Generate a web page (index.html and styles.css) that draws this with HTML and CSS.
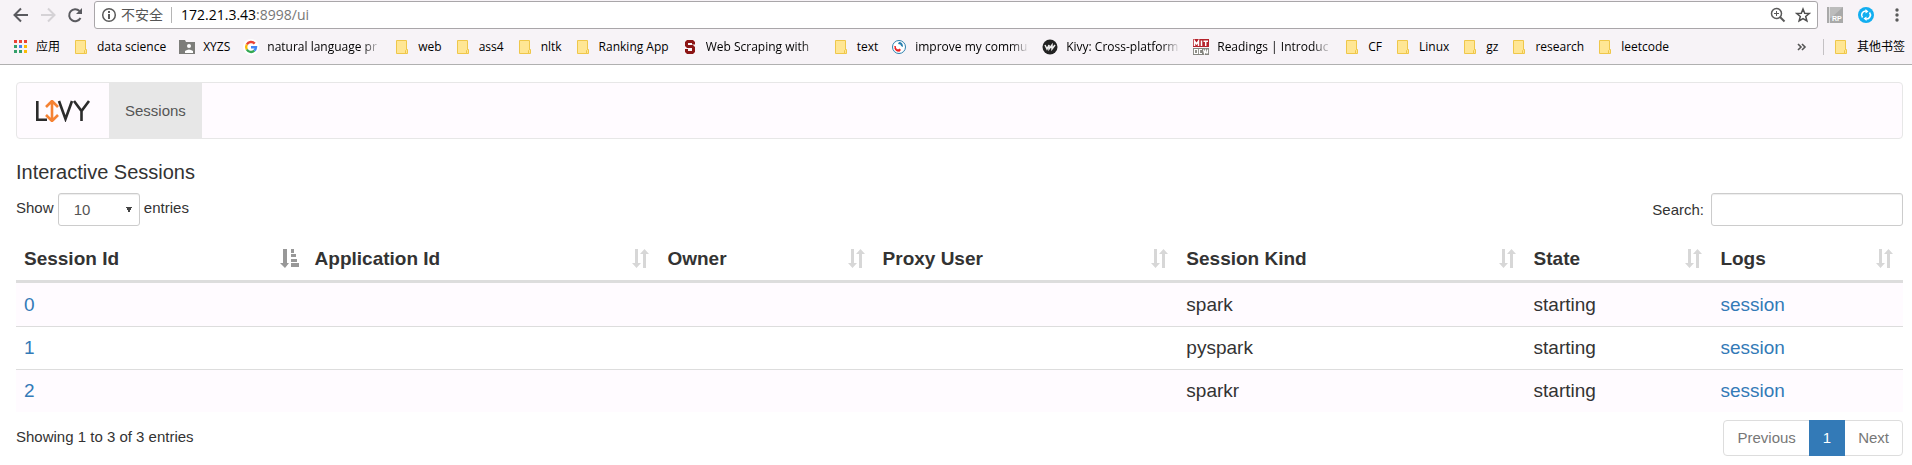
FILE: index.html
```
<!DOCTYPE html>
<html lang="zh-CN">
<head>
<meta charset="utf-8">
<title>Livy - Sessions</title>
<link rel="stylesheet" href="styles.css">
</head>
<body>
<svg class="defs" aria-hidden="true">
  <symbol id="folder" viewBox="0 0 16 16"><path d="M2.5 1.500h10v13h-10z" fill="#ffe694" stroke="#efc74a"/><path d="M12.500 10.500h1v4h-2v-3z" fill="#ffe694" stroke="#efc74a"/></symbol>
  <symbol id="sort" viewBox="0 0 20 20"><path d="M4 0h3v14h3l-4.500 5L1 14h3zM12 19V5H9l4.500-5L18 5h-3v14z" fill="#d7d7d7"/></symbol>
  <symbol id="sorted" viewBox="0 0 20 20"><path d="M4 0h4v14h2l-4 5-5-5h3zM12 0h3v4h-3zM12 5h5v3h-5zM12 10h6v3h-6zM12 14h8v4h-8z" fill="#989898"/></symbol>
</svg>
<header class="browser">
  <div class="toolbar">
    <button class="tool" aria-label="Back"><svg width="16" height="16" viewBox="0 0 16 16"><path d="M15 8H2M8 1.500L1.500 8 8 14.500" fill="none" stroke="#5a5a5f" stroke-width="2"/></svg></button>
    <button class="tool" aria-label="Forward"><svg width="16" height="16" viewBox="0 0 16 16"><path d="M1 8h13M8 1.500L14.500 8 8 14.500" fill="none" stroke="#d5d2d6" stroke-width="2"/></svg></button>
    <button class="tool" aria-label="Reload"><svg width="16" height="16" viewBox="0 0 16 16"><path d="M13.500 11A6 6 0 1 1 12.500 4" fill="none" stroke="#5a5a5f" stroke-width="2"/><path d="M15 1v6H9z" fill="#5a5a5f"/></svg></button>
    <div class="address">
      <svg width="16" height="16" viewBox="0 0 16 16"><circle cx="8" cy="8" r="6.300" fill="none" stroke="#5a5a5a" stroke-width="1.500"/><path d="M7 4h2v2H7zM7 7h2v5H7z" fill="#5a5a5a"/></svg>
      <span class="secure">不安全</span>
      <span class="url">172.21.3.43<span class="path">:8998/ui</span></span>
      <button class="tool" aria-label="Zoom"><svg width="16" height="16" viewBox="0 0 16 16"><circle cx="6.500" cy="6.500" r="5" fill="none" stroke="#5a5a5a" stroke-width="1.500"/><path d="M10 10l4.500 4.500" stroke="#5a5a5a" stroke-width="2"/><path d="M4 6.500h5M6.500 4v5" stroke="#5a5a5a"/></svg></button>
      <button class="tool star" aria-label="Bookmark"><svg width="16" height="16" viewBox="0 0 16 16"><path d="M8 2l1.700 4.200 4.500.3-3.500 2.900 1.200 4.600L8 11.600 4.100 14l1.200-4.600L1.800 6.500l4.500-.3z" fill="none" stroke="#4f4f4f" stroke-width="1.500"/></svg></button>
    </div>
    <button class="tool" aria-label="RP extension"><svg width="16" height="16" viewBox="0 0 16 16"><path d="M0 0h16v16H0z" fill="#a9a9a9"/><path d="M3 0h13L4 11H3z" fill="#bcbcbc"/><path d="M2.500 0v16" stroke="#ddd"/><text x="5" y="14" class="rp">RP</text></svg></button>
    <button class="tool" aria-label="Sync extension"><svg width="16" height="16" viewBox="0 0 16 16"><circle cx="8" cy="8" r="8" fill="#12aef0"/><path d="M4.500 10.500A4 4 0 0 1 8 4M11.500 5.500A4 4 0 0 1 8 12" fill="none" stroke="#fff" stroke-width="1.600"/><path d="M7.500 2l3 2.500-3 2zM8.500 14l-3-2.500 3-2z" fill="#fff"/></svg></button>
    <button class="tool" aria-label="Menu"><svg width="16" height="16" viewBox="0 0 16 16"><g fill="#5a5a5a"><circle cx="8" cy="3" r="1.700"/><circle cx="8" cy="8" r="1.700"/><circle cx="8" cy="13" r="1.700"/></g></svg></button>
  </div>
  <nav class="bookmarks" aria-label="Bookmarks">
    <a href="#"><svg viewBox="0 0 16 16"><path d="M2 1h3v3H2z" fill="#ea4335"/><path d="M7 1h3v3H7zM12 1h3v3h-3z" fill="#ea4335"/><path d="M2 6h3v3H2z" fill="#34a06a"/><path d="M7 6h3v3H7z" fill="#4285f4"/><path d="M12 6h3v3h-3z" fill="#fbbc05"/><path d="M2 11h3v3H2zM7 11h3v3H7z" fill="#34a06a"/><path d="M12 11h3v3h-3z" fill="#fbbc05"/></svg><span>应用</span></a>
    <a href="#"><svg><use href="#folder"/></svg><span>data science</span></a>
    <a href="#"><svg viewBox="0 0 16 16"><path d="M0 1h6l1 2h9v12H0z" fill="#7d7d7a"/><circle cx="10" cy="7" r="2" fill="#fff"/><path d="M6 14v-2q4-3 8 0v2z" fill="#fff"/></svg><span>XYZS</span></a>
    <a href="#"><svg viewBox="0 0 16 16"><circle cx="8" cy="8" r="8" fill="#fff"/><g fill="none" stroke-width="2.400"><path d="M3.800 5.500A4.900 4.900 0 0 1 11.700 4.600" stroke="#ea4335"/><path d="M3.800 5.500a5 5 0 0 0 0 5" stroke="#fbbc05"/><path d="M3.800 10.500a4.900 4.900 0 0 0 7.500 1.200" stroke="#34a853"/><path d="M8 8.200h5a5 5 0 0 1-1.700 3.500" stroke="#4285f4"/></g></svg><span class="cut">natural language pr</span></a>
    <a href="#"><svg><use href="#folder"/></svg><span>web</span></a>
    <a href="#"><svg><use href="#folder"/></svg><span>ass4</span></a>
    <a href="#"><svg><use href="#folder"/></svg><span>nltk</span></a>
    <a href="#"><svg><use href="#folder"/></svg><span>Ranking App</span></a>
    <a href="#"><svg viewBox="0 0 16 16"><path d="M13 5.500V3l-2-2H5L3 3v4l2 2h5v3H6v-2H3v3l2 2h6l2-2V8l-2-2H6V4h4v1.500z" fill="#8c1515"/></svg><span class="cut">Web Scraping with</span></a>
    <a href="#"><svg><use href="#folder"/></svg><span>text</span></a>
    <a href="#"><svg viewBox="0 0 16 16"><circle cx="8" cy="8" r="6.500" fill="#fff" stroke="#2a7fae"/><path d="M8 3q4 0 4 5l-2-1q0-2-3-2z" fill="#2a7fae"/><path d="M4 7l1 3q2 2 4 0v2q-4 1-5-2z" fill="#e22" stroke="#e22"/></svg><span class="cut">improve my commu</span></a>
    <a href="#"><svg viewBox="0 0 16 16"><circle cx="8" cy="8" r="7.500" fill="#222"/><path d="M3 6l2 4 2-4v4l3-4v4l3-4" fill="none" stroke="#eee" stroke-width="1.500"/></svg><span class="cut">Kivy: Cross-platform</span></a>
    <a href="#"><svg viewBox="0 0 16 16"><path d="M0 0h16v8H0z" fill="#b5222b"/><path d="M0 9h16v7H0z" fill="#85857f"/><g fill="none" stroke="#fff"><path stroke-width="1.500" d="M1.500 7V2l2 3 2-3v5M8.500 1.500V7M10.500 2.200H15M12.700 2v5"/><path stroke-width="1.200" d="M1.500 10.500h3v4h-3zM9 10.500H6.500v4H9M14.500 10.500v4M10.500 10.500l1 4 1-3 1 3"/></g></svg><span class="cut">Readings | Introduc</span></a>
    <a href="#"><svg><use href="#folder"/></svg><span>CF</span></a>
    <a href="#"><svg><use href="#folder"/></svg><span>Linux</span></a>
    <a href="#"><svg><use href="#folder"/></svg><span>gz</span></a>
    <a href="#"><svg><use href="#folder"/></svg><span>research</span></a>
    <a href="#"><svg><use href="#folder"/></svg><span>leetcode</span></a>
    <button class="more" aria-label="More bookmarks"><svg viewBox="0 0 16 16"><path d="M4 5l3 3-3 3M8 5l3 3-3 3" fill="none" stroke="#555" stroke-width="1.600"/></svg></button>
    <a class="other" href="#"><svg><use href="#folder"/></svg><span>其他书签</span></a>
  </nav>
</header>
<main class="page">
  <nav class="navbar">
    <a class="brand" href="#" aria-label="Livy"><svg width="56" height="22" viewBox="0 0 56 22"><g fill="none" stroke="#2b2b2b" stroke-width="2.600"><path d="M2.300 1v18.700H12"/><path d="M24 1l6.500 18L37 1"/><path d="M39 1l7.500 10L54 1M46.500 10v11"/></g><path d="M17 2v18M11 7l6-6 6 6M11 15l6 6 6-6" fill="none" stroke="#f58233" stroke-width="2.600"/></svg></a>
    <a class="tab" href="#">Sessions</a>
  </nav>
  <h1>Interactive Sessions</h1>
  <div class="controls">
    <label>Show <select><option>10</option><option>25</option><option>50</option><option>100</option></select> entries</label>
    <label class="search">Search: <input type="search"></label>
  </div>
  <table>
    <colgroup><col class="c-id"><col class="c-app"><col class="c-owner"><col class="c-proxy"><col class="c-kind"><col class="c-state"><col class="c-logs"></colgroup>
    <thead><tr>
      <th><button>Session Id<svg><use href="#sorted"/></svg></button></th>
      <th><button>Application Id<svg><use href="#sort"/></svg></button></th>
      <th><button>Owner<svg><use href="#sort"/></svg></button></th>
      <th><button>Proxy User<svg><use href="#sort"/></svg></button></th>
      <th><button>Session Kind<svg><use href="#sort"/></svg></button></th>
      <th><button>State<svg><use href="#sort"/></svg></button></th>
      <th><button>Logs<svg><use href="#sort"/></svg></button></th>
    </tr></thead>
    <tbody>
      <tr><td><a href="#">0</a></td><td></td><td></td><td></td><td>spark</td><td>starting</td><td><a href="#">session</a></td></tr>
      <tr><td><a href="#">1</a></td><td></td><td></td><td></td><td>pyspark</td><td>starting</td><td><a href="#">session</a></td></tr>
      <tr><td><a href="#">2</a></td><td></td><td></td><td></td><td>sparkr</td><td>starting</td><td><a href="#">session</a></td></tr>
    </tbody>
  </table>
  <footer class="foot">
    <p>Showing 1 to 3 of 3 entries</p>
    <nav class="pages" aria-label="Pages"><a href="#">Previous</a><a class="current" href="#">1</a><a href="#">Next</a></nav>
  </footer>
</main>
</body>
</html>
```
FILE: styles.css
```
* { box-sizing: border-box; }
body {
  margin: 0;
  background: #fff;
  color: #333;
  font: 15px/22px "Liberation Sans", Arial, sans-serif;
}
a { color: #337ab7; text-decoration: none; }
button { padding: 0; border: 0; background: none; color: inherit; font: inherit; }
.defs { display: none; }

.browser {
  background: #f7f3f7;
  border-bottom: 1px solid #b0b0b0;
  color: #000;
  font-family: "Open Sans", "Noto Sans CJK SC", sans-serif;
}
.toolbar { display: flex; align-items: center; gap: 11px; padding: 1px 3px 0 13px; }
.tool { display: flex; width: 16px; height: 16px; flex: none; }
.address {
  flex: 1;
  display: flex;
  align-items: center;
  height: 28px;
  margin-right: -2px;
  padding: 0 6px;
  background: #fff;
  border: 1px solid #a9a6a9;
  border-radius: 3px;
  font-size: 14px;
}
.address ~ .tool { margin-right: 4px; }
.secure { margin-left: 4px; padding-right: 8px; border-right: 1px solid #b5b5b5; color: #555; line-height: 16px; }
.url { flex: 1; margin-left: 9px; }
.path { color: #777; }
.star { margin-left: 9px; }
.rp { font: bold 7px "Liberation Sans", sans-serif; fill: #fff; }

.bookmarks { display: flex; align-items: center; gap: 13px; height: 35px; padding: 0 7px 0 12px; font-size: 12px; }
.bookmarks a { display: flex; align-items: center; gap: 8px; color: #000; white-space: nowrap; }
.bookmarks svg { width: 16px; height: 16px; flex: none; display: block; }
.cut { width: 114px; mask-image: linear-gradient(to right, #000 84%, transparent); }
.more { margin-left: auto; }
.other { padding-left: 10px; background: linear-gradient(#c4c1c4, #c4c1c4) left center / 1px 16px no-repeat; }

.page { padding: 17px 9px 9px 16px; }
.navbar { display: flex; height: 57px; background: #fffbff; border: 1px solid #e7e7e7; border-radius: 4px; }
.brand { display: flex; align-items: center; padding: 0 18px; }
.tab { display: flex; align-items: center; padding: 0 16px; background: #e7e7e7; color: #555; }
h1 { margin: 22px 0 10px; font-size: 20px; line-height: 22px; font-weight: 400; }
.controls { display: flex; justify-content: space-between; }
select, input {
  height: 33px;
  border: 1px solid #ccc;
  border-radius: 3px;
  background: #fff;
  color: #555;
  font: inherit;
  box-shadow: inset 0 1px 1px #00000013;
}
select {
  width: 82px;
  padding: 0 12px 0 15px;
  vertical-align: middle;
  appearance: none;
  background-image: linear-gradient(to bottom right, #444 50%, transparent 52%), linear-gradient(to bottom left, #444 50%, transparent 52%);
  background-size: 3px 6px;
  background-position: right 7px center, right 10px center;
  background-repeat: no-repeat;
}
.search { display: flex; align-items: center; gap: 7px; }
input { width: 192px; }

table { width: 100%; margin-top: 11px; border-collapse: separate; border-spacing: 0; table-layout: fixed; font-size: 19px; line-height: 26px; }
.c-id { width: 15.4%; }
.c-app { width: 18.7%; }
.c-owner { width: 11.4%; }
.c-proxy { width: 16.1%; }
.c-kind { width: 18.4%; }
.c-state { width: 9.9%; }
th { padding: 9px 8px 8px; border-bottom: 3px solid #ddd; text-align: left; }
th button { display: flex; justify-content: space-between; align-items: center; width: 100%; font-weight: 700; }
th svg { width: 20px; height: 20px; }
td { height: 43px; padding: 8px; border-top: 1px solid #ddd; }
tbody tr:first-child td { border-top: 0; }
tbody tr:nth-child(odd) { background: #fffbff; }
.foot { display: flex; justify-content: space-between; margin-top: 8px; }
.foot p { margin: 6px 0; }
.pages { display: flex; height: 36px; border: 1px solid #ddd; border-radius: 4px; }
.pages a { padding: 6px 13px; color: #777; }
.pages .current { margin: -1px 0; padding: 7px 14px; background: #337ab7; color: #fff; }
```
